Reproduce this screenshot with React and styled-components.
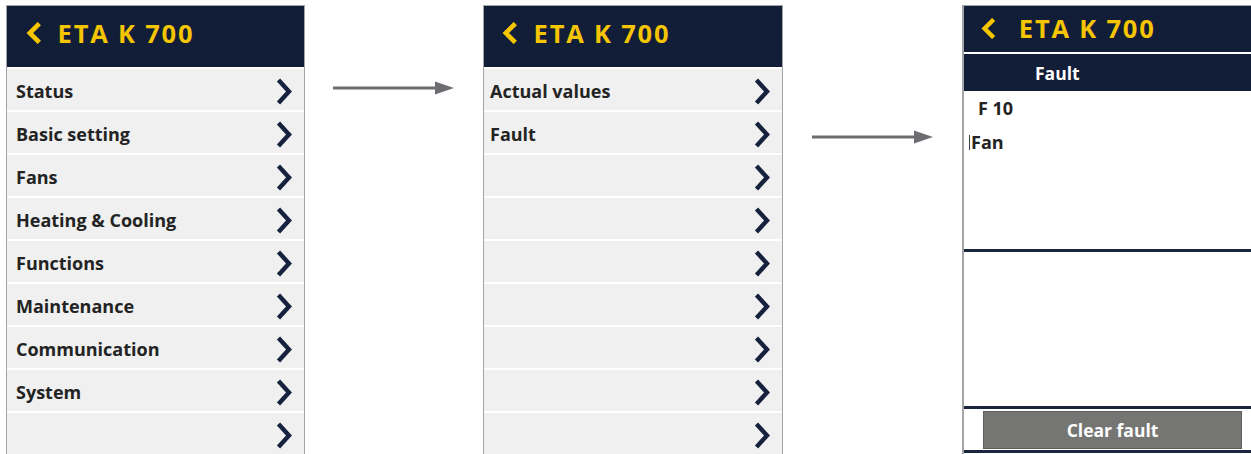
import React from 'react'
import styled, { createGlobalStyle } from 'styled-components';

const GlobalStyle = createGlobalStyle`
  html, body {
    margin: 0;
    padding: 0;
    background: #fff;
    font-family: "Open Sans", Lato, sans-serif;
  }
`;

const Page = styled.div`
  width: 1251px;
  height: 454px;
  overflow: hidden;
  display: flex;
  align-items: flex-start;
  padding: 5px 0 0 6px;
  box-sizing: border-box;
`;

const Panel = styled.div`
  flex: none;
  width: ${props => props.width}px;
  height: 470px;
  border: 1px solid #a3a5a8;
  border-left-width: ${props => props.edge || 1}px;
  border-bottom: none;
  box-sizing: border-box;
  background: #fff;
  display: flex;
  flex-direction: column;
`;

const Header = styled.div`
  height: ${props => props.height}px;
  flex: none;
  box-sizing: border-box;
  padding-bottom: ${props => props.lift}px;
  background: #121e38;
  display: flex;
  align-items: center;
  padding-left: ${props => props.inset}px;
  gap: ${props => props.gap}px;
  color: #f4c500;
  font-weight: 700;
  font-size: 25.5px;
  letter-spacing: 1.8px;
`;

const List = styled.div`
  padding-top: 2px;
  display: flex;
  flex-direction: column;
`;

const Row = styled.div`
  height: 41px;
  margin-bottom: 2px;
  background: #eff0ef;
  display: flex;
  align-items: center;
  justify-content: space-between;
  padding: 3px 11px 0 ${props => props.inset}px;
  box-sizing: border-box;
  font-size: 18px;
  font-weight: 700;
  color: #232323;
`;

const ArrowSlot = styled.div`
  flex: none;
  width: ${props => props.width}px;
  margin-top: ${props => props.top}px;
  display: flex;
  justify-content: center;
`;

const SubHeader = styled.div`
  height: 37px;
  flex: none;
  margin-top: 2px;
  background: #121e38;
  color: #fff;
  font-weight: 700;
  font-size: 17.5px;
  display: flex;
  align-items: center;
  padding-left: 71px;
`;

const FaultBody = styled.div`
  height: 161px;
  flex: none;
  box-sizing: border-box;
  border-bottom: 3px solid #1a2540;
`;

const FaultLine = styled.div`
  font-size: 18px;
  font-weight: 700;
  color: #232323;
  height: 34px;
  display: flex;
  align-items: center;
  padding-left: ${props => props.inset}px;
`;

const Cursor = styled.span`
  width: 1px;
  height: 15px;
  background: #444;
  margin-right: 1px;
`;

const Blank = styled.div`
  height: 157px;
  flex: none;
  box-sizing: border-box;
  border-bottom: 3px solid #1a2540;
`;

const ButtonBar = styled.div`
  height: 44px;
  flex: none;
  padding: 2px 19px 0;
  box-sizing: border-box;
  border-bottom: 3px solid #1a2540;
`;

const ClearButton = styled.div`
  height: 38px;
  background: #757674;
  border: 1px solid #5f605e;
  box-sizing: border-box;
  color: #fff;
  font-weight: 700;
  font-size: 17.5px;
  display: flex;
  align-items: center;
  justify-content: center;
`;

const BackIcon = ({ size = 22 }) => (
  <svg width={size * 0.8} height={size} viewBox="0 0 17 22">
    <polyline points="14,1.5 4.5,11 14,20.5" fill="none" stroke="#f4c500" strokeWidth="4.6" strokeLinejoin="miter" />
  </svg>
);

const NextIcon = () => (
  <svg width="17" height="27" viewBox="0 0 17 27">
    <polyline points="2.5,2 13,13.5 2.5,25" fill="none" stroke="#16223d" strokeWidth="4.4" strokeLinejoin="miter" />
  </svg>
);

const FlowArrow = () => (
  <svg width="122" height="14" viewBox="0 0 122 14">
    <line x1="0" y1="7" x2="104" y2="7" stroke="#6d6e71" strokeWidth="3" />
    <polygon points="102,0.5 121,7 102,13.5" fill="#6d6e71" />
  </svg>
);

const menu = ['Status', 'Basic setting', 'Fans', 'Heating & Cooling', 'Functions', 'Maintenance', 'Communication', 'System', ''];
const sub = ['Actual values', 'Fault', '', '', '', '', '', '', ''];

const App = () => (
  <>
    <GlobalStyle />
    <Page>
      <Panel width={299}>
        <Header height={61} lift={8} inset={18} gap={15}>
          <BackIcon />
          ETA K 700
        </Header>
        <List>
          {menu.map((m, i) => (
            <Row key={i} inset={9}>
              <span>{m}</span>
              <NextIcon />
            </Row>
          ))}
        </List>
      </Panel>
      <ArrowSlot width={178} top={76}>
        <FlowArrow />
      </ArrowSlot>
      <Panel width={300}>
        <Header height={61} lift={8} inset={17} gap={15}>
          <BackIcon />
          ETA K 700
        </Header>
        <List>
          {sub.map((m, i) => (
            <Row key={i} inset={6}>
              <span>{m}</span>
              <NextIcon />
            </Row>
          ))}
        </List>
      </Panel>
      <ArrowSlot width={179} top={125}>
        <FlowArrow />
      </ArrowSlot>
      <Panel width={300} edge={2}>
        <Header height={46} lift={2} inset={16} gap={22}>
          <BackIcon size={21} />
          ETA K 700
        </Header>
        <SubHeader>Fault</SubHeader>
        <FaultBody>
          <FaultLine inset={14}>F 10</FaultLine>
          <FaultLine inset={5}><Cursor />Fan</FaultLine>
        </FaultBody>
        <Blank />
        <ButtonBar>
          <ClearButton>Clear fault</ClearButton>
        </ButtonBar>
      </Panel>
    </Page>
  </>
);

export default App;
